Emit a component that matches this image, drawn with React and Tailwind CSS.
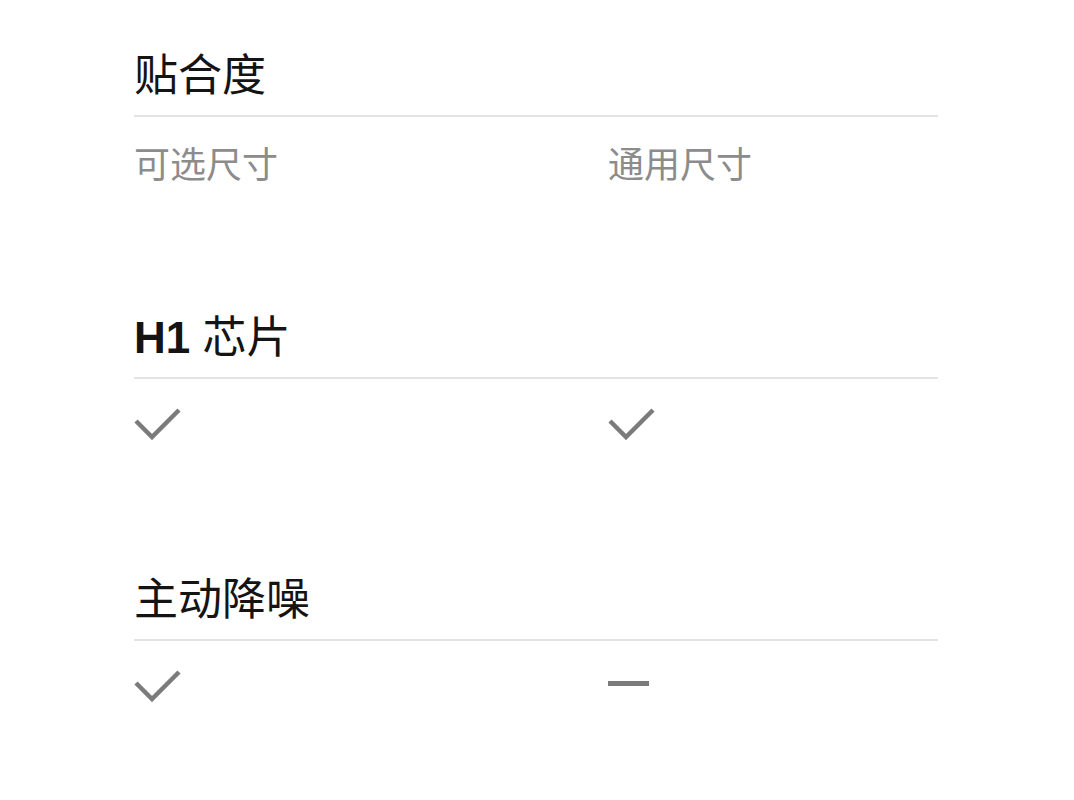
import React from 'react';

const rows = [
  { title: '贴合度', left: { text: '可选尺寸' }, right: { text: '通用尺寸' } },
  { title: 'H1 芯片', left: { check: true }, right: { check: true } },
  { title: '主动降噪', left: { check: true }, right: { dash: true } },
];

function Check() {
  return (
    <svg width="48" height="34" viewBox="0 0 48 34" className="block -mt-[2px]" fill="none">
      <polyline
        points="2,15 18,31 45,4"
        stroke="#7b7b7b"
        strokeWidth="4.5"
        strokeLinecap="butt"
        strokeLinejoin="miter"
      />
    </svg>
  );
}

function Cell({ cell }) {
  if (cell.text) {
    return <p className="text-[36px] leading-[40px] text-[#8c8c8c]">{cell.text}</p>;
  }
  if (cell.check) {
    return <Check />;
  }
  // dash for "not supported"
  return (
    <div className="h-[40px] flex items-start pt-[11px]">
      <div className="w-[41px] h-[5px] bg-[#7b7b7b]"></div>
    </div>
  );
}

export default function App() {
  return (
    <main
      className="min-h-[800px] w-full bg-white pt-[50px]"
      style={{ fontFamily: '"Liberation Sans", "Noto Sans CJK SC", sans-serif' }}
    >
      <div className="mx-auto w-[802px] flex flex-col gap-[126px]">
        {rows.map((row) => (
          <section key={row.title}>
            {/* Heading */}
            <h2 className="text-[44px] leading-[52px] font-normal text-[#141414] pb-[13px] border-b-2 border-[#e3e3e3] -ml-[2px]">
              {row.title.startsWith('H1') ? (
                <>
                  <span className="font-bold">H1</span> 芯片
                </>
              ) : (
                row.title
              )}
            </h2>

            {/* Values */}
            <div className="grid grid-cols-[472px_1fr] mt-[29px] h-[40px]">
              <div className="-ml-[2px]">
                <Cell cell={row.left} />
              </div>
              <div>
                <Cell cell={row.right} />
              </div>
            </div>
          </section>
        ))}
      </div>
    </main>
  );
}
